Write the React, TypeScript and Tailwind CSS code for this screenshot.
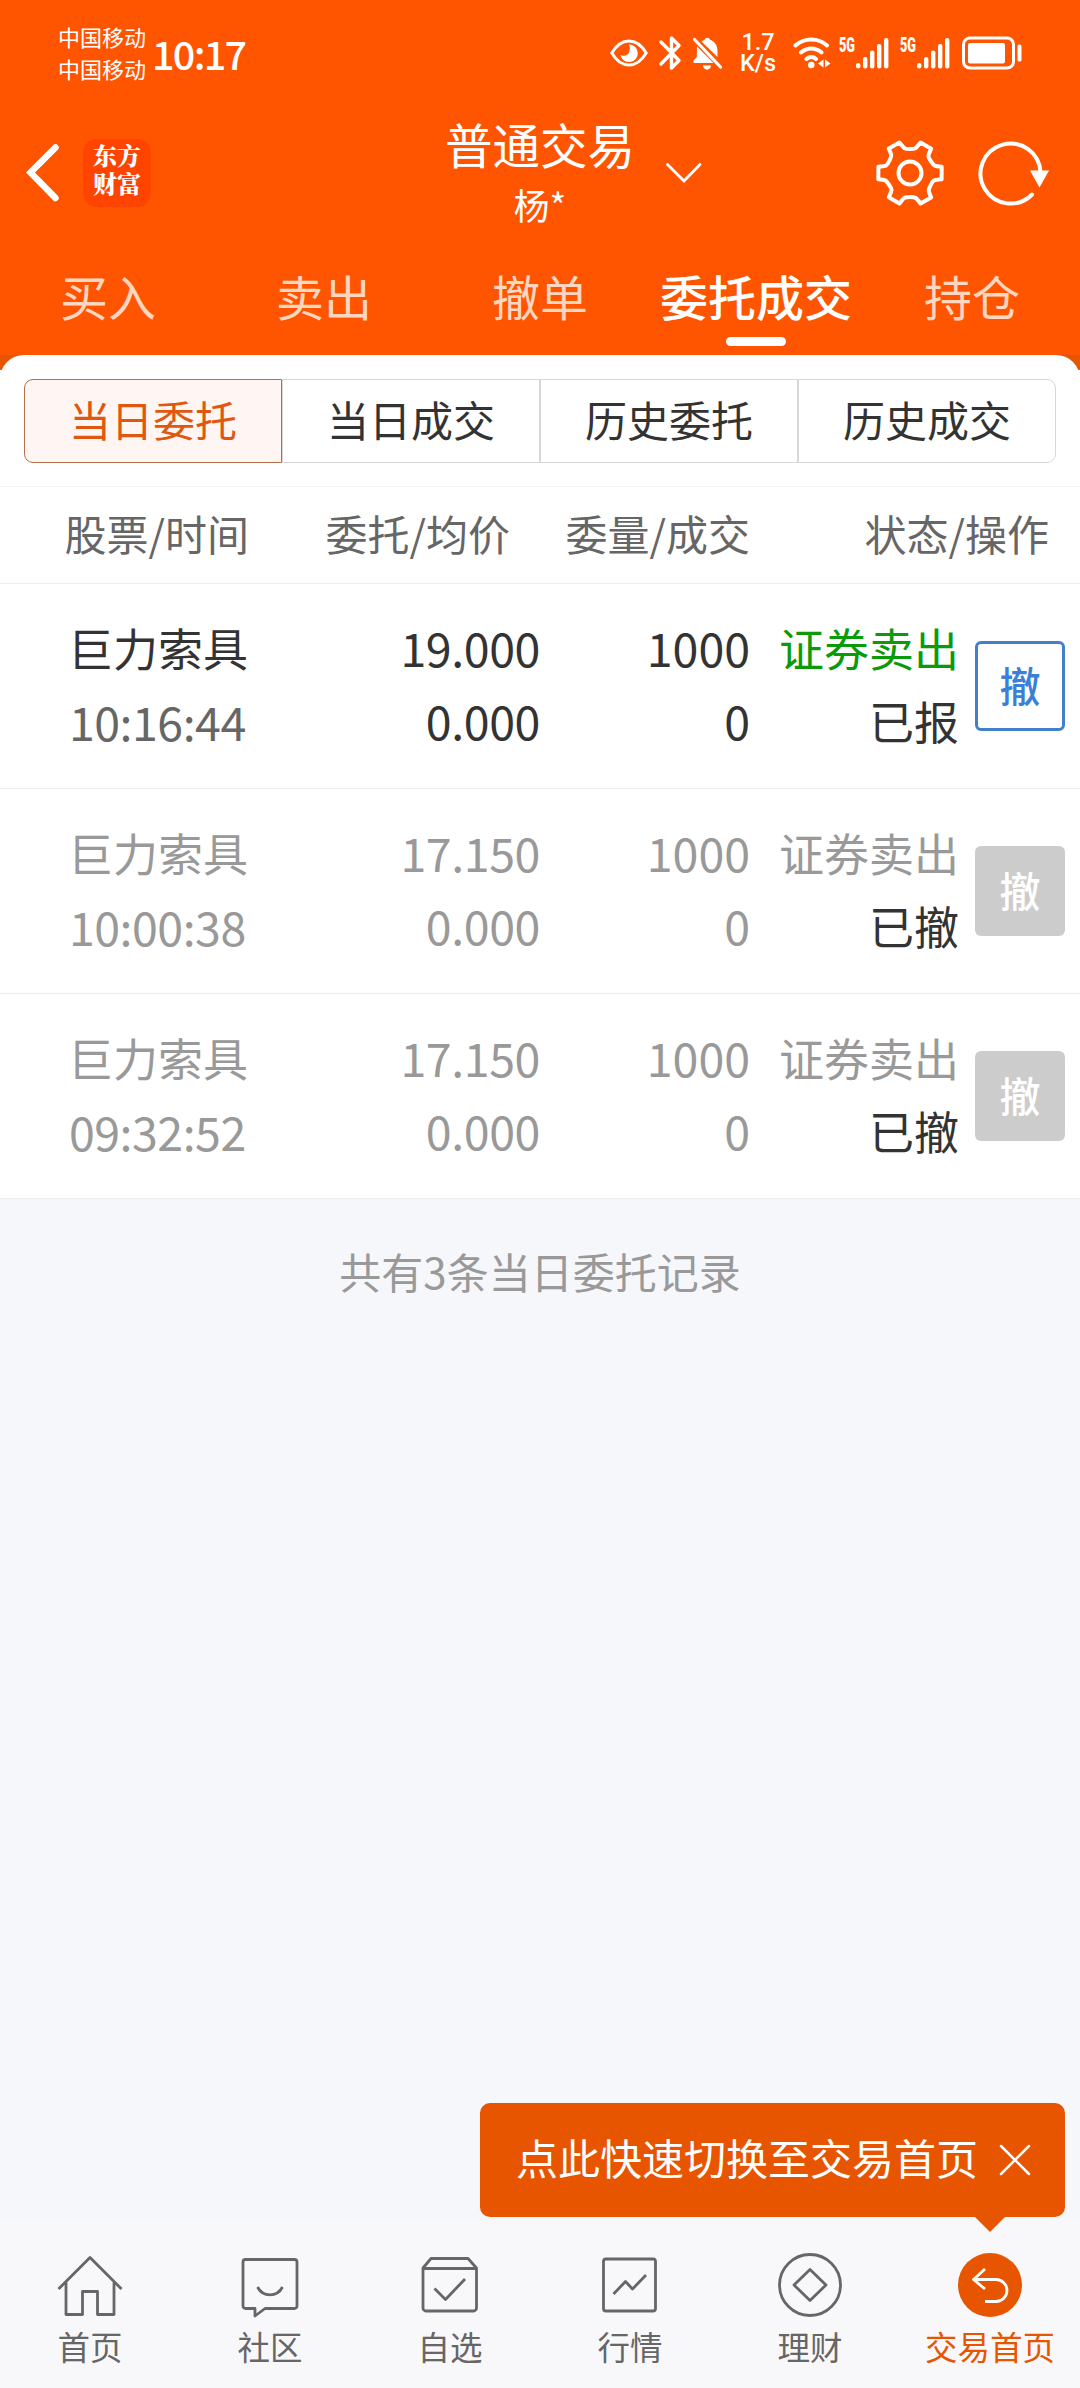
import { useState } from 'react'
import type { ReactNode } from 'react'
import clsx from 'clsx'

type Order = {
  name: string
  time: string
  price: string
  avgPrice: string
  amount: string
  dealt: string
  side: string
  status: string
  active: boolean
}

const TABS = ['买入', '卖出', '撤单', '委托成交', '持仓']
const FILTERS = ['当日委托', '当日成交', '历史委托', '历史成交']

const ORDERS: Order[] = [
  { name: '巨力索具', time: '10:16:44', price: '19.000', avgPrice: '0.000', amount: '1000', dealt: '0', side: '证券卖出', status: '已报', active: true },
  { name: '巨力索具', time: '10:00:38', price: '17.150', avgPrice: '0.000', amount: '1000', dealt: '0', side: '证券卖出', status: '已撤', active: false },
  { name: '巨力索具', time: '09:32:52', price: '17.150', avgPrice: '0.000', amount: '1000', dealt: '0', side: '证券卖出', status: '已撤', active: false },
]

function Signal() {
  return (
    <svg className="overflow-visible" width="50" height="34" viewBox="0 0 50 34" fill="#fff">
      <text x="0" y="16" fontSize="19.5" fontWeight="900" fontFamily="Roboto, sans-serif" textLength="16" lengthAdjust="spacingAndGlyphs">5G</text>
      <rect x="17" y="27" width="4.4" height="5.5" rx="2.2" />
      <rect x="24" y="21" width="4.4" height="11.5" rx="2" />
      <rect x="31" y="14.5" width="4.4" height="18" rx="2" />
      <rect x="38" y="8" width="4.4" height="24.5" rx="2" />
      <rect x="45" y="2" width="4.4" height="30.5" rx="2" />
    </svg>
  )
}

function StatusBar() {
  return (
    <div className="flex h-[108px] items-center pb-[2px] pl-[58px]">
      <div className="flex w-[94px] flex-col pb-[3px] text-[22px] leading-[32px]">
        <span>中国移动</span>
        <span>中国移动</span>
      </div>
      <span className="w-[458px] text-[39.5px] font-medium leading-[50px] tracking-[-1.7px]">10:17</span>

      {/* 护眼 */}
      <svg className="shrink-0" width="38" height="34" viewBox="0 0 38 34" fill="none" stroke="#fff" strokeWidth="3">
        <path d="M1.8 17C6 10 12 5 19 5S32 10 36.2 17C32 24 26 29 19 29S6 24 1.8 17Z" />
        <path d="M19 8.5a8.8 8.8 0 1 1-8.6 10.5c2.800 1.600 6.900.600 8.600-2.600 1.400-2.700.900-5.800 0-7.900Z" fill="#fff" stroke="none" />
      </svg>
      {/* 蓝牙 */}
      <svg className="ml-[10px] shrink-0" width="24" height="36" viewBox="0 0 24 36" fill="none" stroke="#fff" strokeWidth="3.4" strokeLinecap="round" strokeLinejoin="round">
        <path d="M3 7 21 25.500 13.500 33V3L21 10.500 3 29" />
      </svg>
      {/* 静音 */}
      <svg className="ml-[10px] shrink-0" width="31" height="34" viewBox="0 0 31 34" fill="#fff">
        <path d="M9.500 5.500C11 4.500 12 4.200 12.500 3.800 13 1 17.500 1 18 3.800c5 2 7.500 5.800 7.500 11.200v6Z" />
        <path d="M5 10.500 21.500 27H1.500v-2.500L4.800 21Z" />
        <path d="M11 29.500h8c0 5.500-8 5.500-8 0Z" />
        <path d="M2.500 3.500 28.500 31" stroke="#fff" strokeWidth="3.200" strokeLinecap="round" />
      </svg>
      <div className="ml-[15px] flex w-[40px] shrink-0 flex-col items-center font-[Roboto,sans-serif] text-[23.500px] font-medium leading-[21px]">
        <span>1.7</span>
        <span>K/s</span>
      </div>
      {/* WiFi */}
      <svg className="ml-[15px] shrink-0" width="38" height="34" viewBox="0 0 38 34" fill="none" stroke="#fff" strokeWidth="4" strokeLinecap="round">
        <path d="M2.500 9.500c9-8 22.500-8 31.500 0M8 16.500c6-5.500 14.500-5.500 20.500 0M13.500 23c3-2.600 6.700-2.600 9.500 0" />
        <circle cx="18.200" cy="29" r="3.300" fill="#fff" stroke="none" />
        <path d="M30.500 23.500v8l-5.500-4ZM32 23.500v8l5.500-4Z" fill="#fff" stroke="none" />
      </svg>
      <div className="ml-[8px] flex shrink-0 gap-[11px]">
        <Signal />
        <Signal />
      </div>
      {/* 电池 */}
      <svg className="ml-[12px] shrink-0" width="60" height="34" viewBox="0 0 60 34" fill="none">
        <rect x="1.500" y="2" width="50" height="30" rx="6.500" stroke="#fff" strokeWidth="3" />
        <rect x="6" y="7" width="37" height="20.500" rx="2" fill="#fff" />
        <rect x="55.500" y="8.500" width="4" height="17" rx="1.500" fill="#fff" />
      </svg>
    </div>
  )
}

function Header() {
  return (
    <div className="flex h-[132px] items-start">
      <div className="flex w-[360px] items-center pl-[26px] pt-[31px]">
        <svg width="34" height="60" viewBox="0 0 34 60" fill="none" stroke="#fff" strokeWidth="6.500" strokeLinecap="round">
          <path d="M29.500 4.500 4.500 29.500 29.500 55" strokeLinejoin="miter" />
        </svg>
        <div className="ml-[23px] flex h-[68px] w-[68px] flex-col items-center justify-center rounded-[14px] bg-[#ff4400] pb-[8px] font-['Noto_Serif_CJK_SC','Noto_Sans_CJK_SC',serif] text-[24px] font-black leading-[28.500px]">
          <span>东方</span>
          <span>财富</span>
        </div>
      </div>

      <div className="relative flex w-[360px] flex-col items-center pt-[6px]">
        <span className="text-[47.500px] leading-[60px]">普通交易</span>
        <span className="text-[36px] leading-[60px]">杨*</span>
        <svg className="absolute left-[304px] top-[53px]" width="40" height="24" viewBox="0 0 40 24" fill="none" stroke="#fff" strokeWidth="2.800" strokeLinecap="round">
          <path d="M3.500 3.500 20 20 36 3.500" />
        </svg>
      </div>

      <div className="flex w-[360px] items-center pl-[155px] pt-[30px]">
        <svg width="70" height="70" viewBox="-35 -35 70 70" fill="none" stroke="#fff" strokeWidth="4" strokeLinejoin="round">
          <path d="M-10.500-30.500C-5.500-24-5.500-24 0-24S5.500-24 10.500-30.500L21.200-24.300C17.600-16.500 17.600-16.500 20.800-12S23.100-7 31.700-6.200L31.600 6.200C23.100 7 23.100 7 20.800 12S17.600 16.500 21.200 24.400L10.500 30.500C5.500 24 5.500 24 0 24S-5.500 24-10.500 30.500L-21.200 24.300C-17.600 16.500-17.600 16.500-20.800 12S-23.100 7-31.700 6.200L-31.600-6.200C-23.100-7-23.100-7-20.800-12S-17.600-16.500-21.200-24.400Z" />
          <circle r="11.500" />
        </svg>
        <svg className="ml-[32px]" width="76" height="70" viewBox="0 0 76 70" fill="none">
          <path d="M63 34A30 30 0 1 0 54.500 56" transform="translate(.5 .5)" stroke="#fff" strokeWidth="4" strokeLinecap="round" />
          <path d="M53 32.500h19l-9.500 17Z" fill="#fff" />
        </svg>
      </div>
    </div>
  )
}

function OrderRow({ order }: { order: Order }) {
  const { active } = order
  return (
    <div className={clsx('flex h-[205px] items-center border-b border-[#ececec] pb-[5px] text-[45px] leading-[73px]', active ? 'text-[#333]' : 'text-[#999]')}>
      <div className="flex w-[300px] flex-col pl-[68px]">
        <span>{order.name}</span>
        <span className={clsx('pl-[1px] text-[46.500px] tracking-[-0.500px]', active ? 'text-[#666]' : 'text-[#999]')}>{order.time}</span>
      </div>
      <div className="flex w-[240px] flex-col items-end pb-[2px] text-[46.500px] tracking-[-0.400px]">
        <span>{order.price}</span>
        <span>{order.avgPrice}</span>
      </div>
      <div className="flex w-[210px] flex-col items-end pb-[2px] text-[46.500px]">
        <span>{order.amount}</span>
        <span>{order.dealt}</span>
      </div>
      <div className="flex w-[209px] flex-col items-end">
        <span className={active ? 'text-[#0a9a0a]' : 'text-[#999]'}>{order.side}</span>
        <span className="text-[#333]">{order.status}</span>
      </div>
      <button
        className={clsx(
          'ml-[16px] mt-[5px] flex h-[90px] w-[90px] items-center justify-center rounded-[6px] pb-[4px] text-[41px] font-medium',
          active ? 'border-[3px] border-[#4280cc] text-[#3a7fd9]' : 'bg-[#ccc] text-white'
        )}
      >
        撤
      </button>
    </div>
  )
}

function NavItem({ label, active, children }: { label: string; active?: boolean; children: ReactNode }) {
  return (
    <button className={clsx('flex w-[180px] flex-col items-center pt-[30px] text-[32.500px] leading-[52px]', active ? 'text-[#e85500]' : 'text-[#666]')}>
      <svg width="70" height="70" viewBox="-35 -35 70 70" fill="none" stroke="currentColor" strokeWidth="2.800" strokeLinejoin="round">
        {children}
      </svg>
      <span className="whitespace-nowrap">{label}</span>
    </button>
  )
}

export default function App() {
  const [tab, setTab] = useState('委托成交')
  const [filter, setFilter] = useState('当日委托')

  return (
    <div className="flex h-[2388px] w-[1080px] flex-col overflow-hidden bg-[#f6f7fa] font-['Noto_Sans_CJK_SC',sans-serif]">
      <div className="bg-[#ff5500] text-white">
        <StatusBar />
        <Header />
        {/* 交易导航 */}
        <div className="flex h-[115px]">
          {TABS.map((t) => (
            <button
              key={t}
              onClick={() => setTab(t)}
              className={clsx('flex w-[216px] flex-col items-center pt-[25px] text-[48px] leading-[60px]', t === tab ? 'font-medium text-white' : 'text-[#ffd6c0]')}
            >
              {t}
              {t === tab && <span className="mt-[12px] h-[9px] w-[60px] rounded-full bg-white" />}
            </button>
          ))}
        </div>
      </div>

      <div className="h-[15px] overflow-hidden bg-[#e85500]">
        <div className="h-[48px] rounded-t-[24px] bg-white" />
      </div>

      <div className="bg-white">
        {/* 筛选 */}
        <div className="flex h-[117px] items-start border-b border-[#f5f5f5] px-[24px] pt-[9px]">
          {FILTERS.map((f) => (
            <button
              key={f}
              onClick={() => setFilter(f)}
              className={clsx(
                'h-[84px] w-[258px] border pb-[5px] text-[42px] leading-[77px] first:rounded-l-[9px] last:rounded-r-[9px]',
                f === filter ? 'border-[#b5704a] bg-[#fff6f3] text-[#e0580f]' : 'border-[#d5d7d9] text-[#333]'
              )}
            >
              {f}
            </button>
          ))}
        </div>

        <div className="flex h-[97px] border-b border-[#ececec] text-[42px] leading-[92px] text-[#666]">
          <span className="w-[249px] text-right">股票/时间</span>
          <span className="w-[261px] text-right">委托/均价</span>
          <span className="w-[240px] text-right">委量/成交</span>
          <span className="w-[299px] text-right">状态/操作</span>
        </div>

        {ORDERS.map((order) => (
          <OrderRow key={order.time} order={order} />
        ))}
      </div>

      <div className="flex-1 pt-[42px] text-center text-[42px] leading-[60px] text-[#999]">共有{ORDERS.length}条当日委托记录</div>

      {/* 底部导航 */}
      <div className="relative flex h-[168px] bg-[#f8f8fa]">
        <NavItem label="首页">
          <path d="M-31.500 4 0-27.500 31.500 4M-24-2.500V29.500H-7.500V6.500H7.500V29.500H24V-2.500" />
        </NavItem>
        <NavItem label="社区">
          <path d="M-24.500-25.500h49a2.500 2.500 0 0 1 2.500 2.500V21a2.500 2.500 0 0 1-2.500 2.500H-5L-15 31V23.500H-24.500A2.500 2.500 0 0 1-27 21V-23a2.500 2.500 0 0 1 2.500-2.500Z" />
          <path d="M-12.500 2C-7 12.500 7 12.500 12.500 2" />
        </NavItem>
        <NavItem label="自选">
          <path d="M-27-17-19-26.500H18L26.500-17V23a3 3 0 0 1-3 3H-24a3 3 0 0 1-3-3ZM-27-16.500H26.500" />
          <path d="M-15.500 3.500-4.500 14.500 15-6" />
        </NavItem>
        <NavItem label="行情">
          <rect x="-26.500" y="-26" width="52" height="52" rx="2.500" />
          <path d="M-16.500 9-4.500-3.500 2.500 4 16-10" />
        </NavItem>
        <NavItem label="理财">
          <circle r="30.500" />
          <path d="M0-15.500 16 0 0 15.500-16 0Z" />
        </NavItem>
        <NavItem label="交易首页" active>
          <circle r="32" fill="#e85500" stroke="none" />
          <path d="M-5-16-16.500-5.500-5 4M-16.500-5.500H6A11 11 0 0 1 6 16.500H-5" stroke="#fff" />
        </NavItem>

        <div className="absolute bottom-[171px] right-[15px] flex h-[114px] w-[585px] items-center rounded-[10px] bg-[#e85500] pl-[36px] text-white">
          <span className="w-[482px] pb-[8px] text-[42px]">点此快速切换至交易首页</span>
          <svg width="34" height="34" viewBox="0 0 34 34" fill="none" stroke="#fff" strokeWidth="2.500" strokeLinecap="round">
            <path d="M3 3 31 31M31 3 3 31" />
          </svg>
          <svg className="absolute left-[494px] top-[113px]" width="32" height="16" viewBox="0 0 32 16" fill="#e85500">
            <path d="M0 0H32L16 16Z" />
          </svg>
        </div>
      </div>
    </div>
  )
}
